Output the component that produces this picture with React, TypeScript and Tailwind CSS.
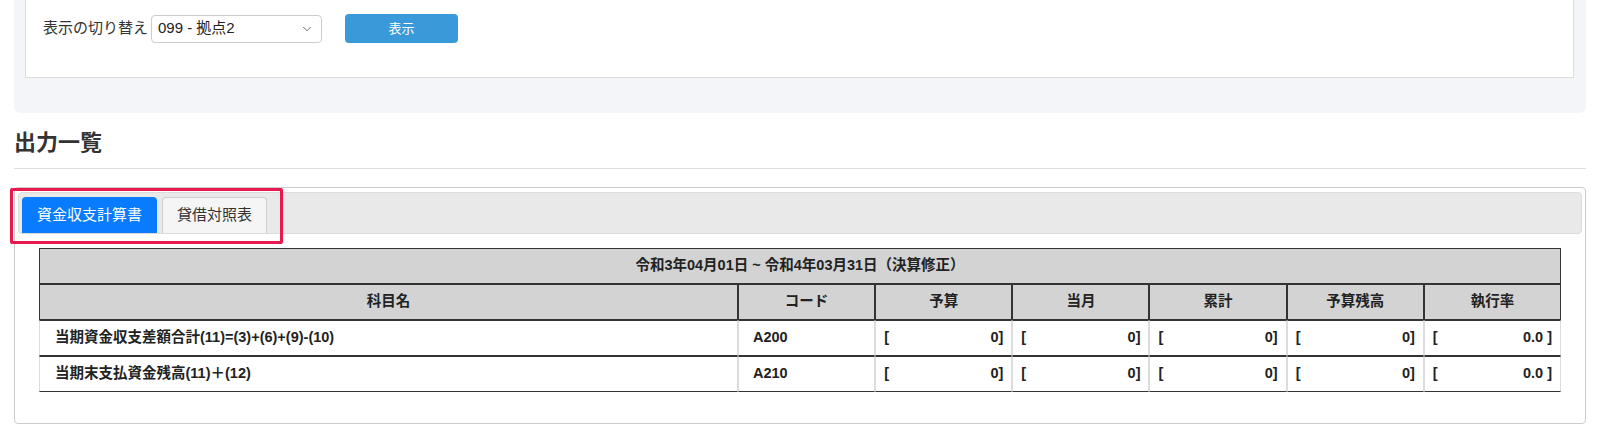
import { ChevronDown } from 'lucide-react';

interface ReportRow {
  name: string;
  code: string;
  budget: string;
  month: string;
  total: string;
  remaining: string;
  rate: string;
}

const columns = ['コード', '予算', '当月', '累計', '予算残高', '執行率'];

const rows: ReportRow[] = [
  {
    name: '当期資金収支差額合計(11)=(3)+(6)+(9)-(10)',
    code: 'A200',
    budget: '0',
    month: '0',
    total: '0',
    remaining: '0',
    rate: '0.0',
  },
  {
    name: '当期末支払資金残高(11)＋(12)',
    code: 'A210',
    budget: '0',
    month: '0',
    total: '0',
    remaining: '0',
    rate: '0.0',
  },
];

const BracketValue = ({ value, spaced }: { value: string; spaced?: boolean }) => (
  <div className="flex justify-between">
    <span>[</span>
    <span>{spaced ? `${value} ]` : `${value}]`}</span>
  </div>
);

export default function App() {
  const dataCell = 'h-[36px] border-x border-y border-x-[#dcdcdc] border-y-[#333] px-[8px] align-middle';

  return (
    <div className="min-h-screen bg-white px-[14px] font-['Liberation_Sans','Noto_Sans_CJK_JP',sans-serif] text-[#333]">
      {/* switch panel */}
      <div className="rounded-b-[6px] bg-[#f4f5f8] pb-[35px] pl-[11px] pr-[12px]">
        <div className="border border-t-0 border-[#dcdcdc] bg-white pb-[34px] pl-[17px] pt-[14px]">
          <div className="flex h-[29px] items-center">
            <span className="text-[15px] text-[#333]">表示の切り替え</span>
            <div className="relative ml-[3px] h-[28px] w-[171px]">
              <select
                defaultValue="099"
                className="h-full w-full appearance-none rounded-[4px] border border-[#ccc] bg-white pl-[6px] text-[15px] text-[#222] outline-none"
              >
                <option value="099">099 - 拠点2</option>
              </select>
              <ChevronDown className="pointer-events-none absolute right-[8px] top-[7px] h-[14px] w-[14px] text-[#555]" strokeWidth={1.5} />
            </div>
            <button className="ml-[23px] h-[29px] w-[113px] rounded-[4px] bg-[#3a9ad9] text-[13px] text-white">
              表示
            </button>
          </div>
        </div>
      </div>

      <h2 className="mt-[13px] text-[22px] font-bold leading-[33px] text-[#333]">出力一覧</h2>
      <div className="mt-[9px] h-px bg-[#dddddd]" />

      {/* output card */}
      <div className="relative mt-[18px] rounded-[4px] border border-[#ccc] p-[3px] pt-[4px]">
        <div className="flex gap-[5px] rounded-[4px] border border-[#dcdcdc] bg-[#e9e9e9] px-[3px] pt-[4px]">
          <button className="h-[36px] rounded-t-[4px] bg-[#087bfe] px-[15px] text-[15px] text-white">
            資金収支計算書
          </button>
          <button className="h-[36px] rounded-t-[4px] border border-b-0 border-[#cfcfcf] bg-[#f5f5f5] px-[14px] text-[15px] text-[#333]">
            貸借対照表
          </button>
        </div>

        <div className="px-[21px] pb-[28px] pt-[14px]">
          <table className="w-full table-fixed border-separate border-spacing-0 text-[14.5px] font-bold text-[#222]">
            <colgroup>
              <col className="w-[699px]" />
              {columns.map((c) => (
                <col key={c} />
              ))}
            </colgroup>
            <thead>
              <tr>
                <th colSpan={7} className="h-[36px] border border-[#333] bg-[#d3d3d3] text-center">
                  令和3年04月01日 ~ 令和4年03月31日（決算修正）
                </th>
              </tr>
              <tr>
                {['科目名', ...columns].map((label) => (
                  <th key={label} className="h-[36px] border border-[#333] bg-[#d3d3d3] text-center">
                    {label}
                  </th>
                ))}
              </tr>
            </thead>
            <tbody>
              {rows.map((row) => (
                <tr key={row.code}>
                  <td className={`${dataCell} pl-[15px]`}>{row.name}</td>
                  <td className={`${dataCell} pl-[14px]`}>{row.code}</td>
                  <td className={dataCell}>
                    <BracketValue value={row.budget} />
                  </td>
                  <td className={dataCell}>
                    <BracketValue value={row.month} />
                  </td>
                  <td className={dataCell}>
                    <BracketValue value={row.total} />
                  </td>
                  <td className={dataCell}>
                    <BracketValue value={row.remaining} />
                  </td>
                  <td className={dataCell}>
                    <BracketValue value={row.rate} spaced />
                  </td>
                </tr>
              ))}
            </tbody>
          </table>
        </div>

        {/* highlight frame around the tabs */}
        <div className="pointer-events-none absolute -left-[5px] top-0 h-[56px] w-[273px] rounded-[2px] border-[3px] border-[#e8194f]" />
      </div>
    </div>
  );
}
